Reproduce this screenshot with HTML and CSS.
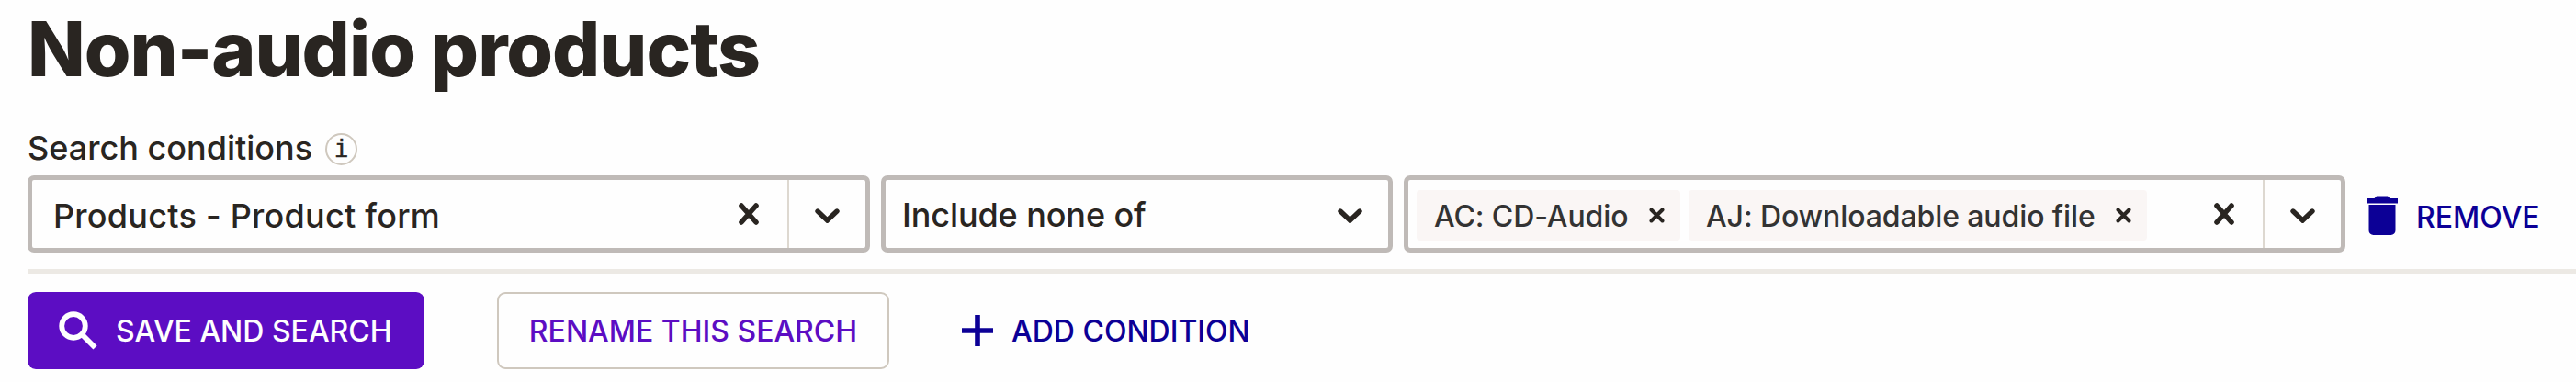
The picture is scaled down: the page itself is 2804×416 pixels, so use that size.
FILE: index.html
```html
<!DOCTYPE html>
<html lang="en">
<head>
  <meta charset="utf-8">
  <title>Non-audio products</title>
  <meta name="viewport" content="width=device-width, initial-scale=1">
  <link rel="stylesheet" href="styles.css">
</head>
<body>

  <main class="page">
    <h1 class="title">Non-audio products</h1>

    <div class="label-row">
      <span class="label">Search conditions</span>
      <span class="info">i</span>
    </div>

    <div class="condition">
      <div class="select field">
        <span class="value">Products - Product form</span>
        <svg class="clear" viewBox="0 0 22 24"><path d="M3 3l16 18M19 3L3 21"/></svg>
        <span class="toggle">
          <svg class="chevron" viewBox="0 0 27 16"><path d="M3 3l10.500 10L24 3"/></svg>
        </span>
      </div>

      <div class="select operator">
        <span class="value">Include none of</span>
        <svg class="chevron" viewBox="0 0 27 16"><path d="M3 3l10.500 10L24 3"/></svg>
      </div>

      <div class="select values">
        <span class="tag tag-cd">
          <span class="tag-text">AC: CD-Audio</span>
          <svg class="tag-remove" viewBox="0 0 17 17"><path d="M2.500 2.500l12 12M14.500 2.500l-12 12"/></svg>
        </span>
        <span class="tag tag-file">
          <span class="tag-text">AJ: Downloadable audio file</span>
          <svg class="tag-remove" viewBox="0 0 17 17"><path d="M2.500 2.500l12 12M14.500 2.500l-12 12"/></svg>
        </span>
        <svg class="clear" viewBox="0 0 22 24"><path d="M3 3l16 18M19 3L3 21"/></svg>
        <span class="toggle">
          <svg class="chevron" viewBox="0 0 27 16"><path d="M3 3l10.500 10L24 3"/></svg>
        </span>
      </div>

      <button class="link-button remove">
        <svg class="trash" viewBox="0 0 34 43">
          <path d="M0 3h8.500l2.500-2.500h12L25.500 3H34v5.500H0z"/>
          <path d="M2.500 10h29v28a5 5 0 0 1-5 5h-19a5 5 0 0 1-5-5z"/>
        </svg>
        <span class="button-text">REMOVE</span>
      </button>
    </div>

    <div class="actions">
      <button class="button save">
        <svg class="search" viewBox="0 0 42 42">
          <circle cx="16" cy="16" r="12.800"/>
          <path d="M25 25l14.500 14.500"/>
        </svg>
        <span class="button-text">SAVE AND SEARCH</span>
      </button>
      <button class="button rename"><span class="button-text">RENAME THIS SEARCH</span></button>
      <button class="link-button add">
        <svg class="plus" viewBox="0 0 34 34"><path d="M17 0v34M0 17h34"/></svg>
        <span class="button-text">ADD CONDITION</span>
      </button>
    </div>
  </main>

</body>
</html>
```
FILE: styles.css
```css
* {
  box-sizing: border-box;
}

body {
  margin: 0;
  background-color: #fefefe;
  color: #292521;
  font-family: Inter, "Liberation Sans", sans-serif;
  font-size: 36px;
  overflow: hidden;
}

.page {
  padding-left: 30px;
  white-space: nowrap;
}

svg {
  display: block;
  flex: none;
  fill: none;
  stroke: currentColor;
}

.title {
  height: 141px;
  margin: 0;
  padding-top: 4px;
  font-size: 82px;
  font-weight: 800;
  line-height: 100px;
  letter-spacing: -1px;
}

.label-row {
  display: flex;
  align-items: center;
  height: 42px;
  gap: 15px;
}

.label {
  width: 309px;
  padding-bottom: 3px;
  font-weight: 500;
  line-height: 38px;
}

.info {
  width: 35px;
  height: 35px;
  border: 2px solid #cfc8be;
  border-radius: 50%;
  font-family: "DejaVu Sans Mono", monospace;
  font-size: 26px;
  line-height: 31px;
  text-align: center;
  -webkit-text-stroke: 0.5px;
}

.condition {
  display: flex;
  align-items: center;
  height: 107px;
  padding: 8px 0 15px;
}

.select {
  display: flex;
  align-items: center;
  height: 84px;
  border: 5px solid #bfbab7;
  border-radius: 7px;
}

.value {
  flex: 1;
  font-weight: 500;
}

.field {
  width: 917px;
  margin-right: 12px;
  padding-left: 23px;
}

.field .value {
  padding-top: 4px;
  letter-spacing: 0.25px;
}

.operator {
  width: 557px;
  margin-right: 12px;
  padding: 0 28px 0 18px;
}

.operator .value {
  padding-top: 1px;
  letter-spacing: -0.1px;
}

.values {
  width: 1025px;
  padding-left: 9px;
}

.clear {
  width: 22px;
  height: 24px;
  margin-right: 31px;
  margin-left: auto;
  stroke-width: 5.6;
  stroke-linecap: round;
}

.toggle {
  display: flex;
  align-items: center;
  justify-content: center;
  width: 85px;
  height: 74px;
  border-left: 2px solid #ddd8d0;
}

.chevron {
  width: 27px;
  height: 16px;
  margin-top: 3px;
  stroke-width: 5.4;
  stroke-linecap: round;
}

.tag {
  display: flex;
  align-items: center;
  justify-content: space-between;
  height: 55px;
  margin: 2px 9px 0 0;
  padding: 0 17px 0 19px;
  border-radius: 4px;
  background-color: #faf6f5;
  color: #333;
  font-size: 32px;
}

.tag-text {
  padding-top: 2px;
  font-weight: 500;
  letter-spacing: -0.1px;
}

.tag-cd {
  width: 287px;
}

.tag-file {
  width: 499px;
}

.tag-remove {
  width: 17px;
  height: 17px;
  color: #292521;
  stroke-width: 4;
  stroke-linecap: round;
}

.link-button,
.button {
  display: flex;
  align-items: center;
  padding: 0;
  border: 0;
  background: none;
  font-family: inherit;
  font-size: 32px;
  font-weight: 500;
  white-space: nowrap;
  cursor: pointer;
}

.link-button {
  color: #0c0096;
}

.remove {
  margin-left: 23px;
  gap: 20px;
}

.trash {
  width: 34px;
  height: 43px;
  margin-top: 3px;
  fill: currentColor;
  stroke: none;
}

.remove .button-text {
  padding-top: 6px;
}

.actions {
  display: flex;
  align-items: center;
  height: 110px;
  margin-top: 3px;
  padding-top: 18px;
  border-top: 5px solid #ece9e4;
}

.button {
  height: 84px;
  border-radius: 9px;
}

.button-text {
  padding-top: 2px;
}

.save {
  width: 432px;
  margin-right: 79px;
  padding-left: 34px;
  gap: 20px;
  background-color: #5c0dc3;
  color: #fefefe;
}

.search {
  width: 42px;
  height: 42px;
  stroke-width: 5.8;
}

.rename {
  justify-content: center;
  width: 427px;
  margin-right: 79px;
  border: 2px solid #cfc8be;
  color: #5c0dc3;
}

.add {
  gap: 20px;
}

.plus {
  width: 34px;
  height: 34px;
  stroke-width: 5.6;
}
```
